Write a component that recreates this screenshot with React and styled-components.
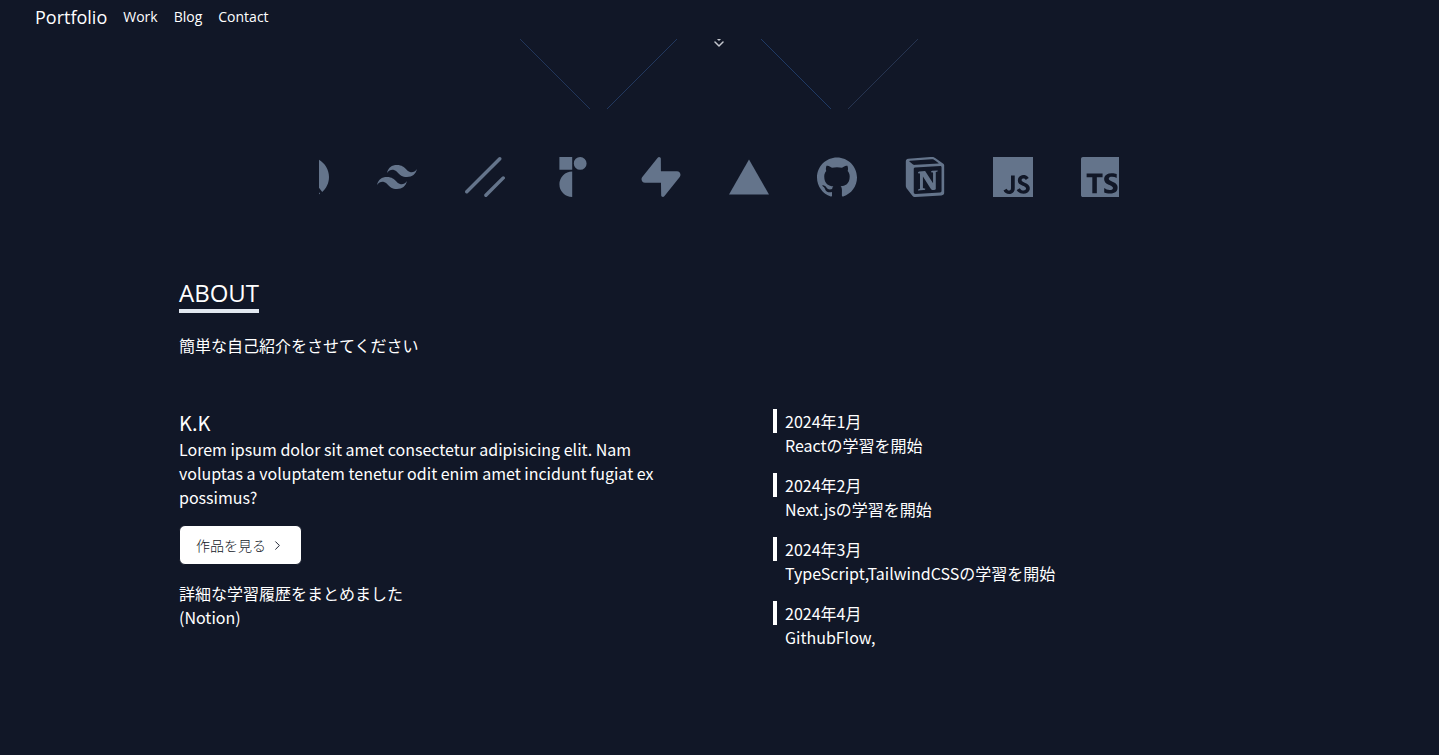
import React from "react";
import styled, { createGlobalStyle } from "styled-components";
import {
  SiNextdotjs,
  SiTailwindcss,
  SiShadcnui,
  SiRadixui,
  SiSupabase,
  SiVercel,
  SiGithub,
  SiNotion,
  SiJavascript,
  SiTypescript,
} from "react-icons/si";
import { ChevronRight } from "lucide-react";

const GlobalStyle = createGlobalStyle`
  *, *::before, *::after { box-sizing: border-box; }
  body {
    margin: 0;
    background: #111727;
    color: #ffffff;
    font-family: "Noto Sans CJK JP", "Noto Sans", sans-serif;
    font-size: 16px;
    font-weight: 400;
    line-height: 24px;
  }
  h1, h2, h3, p, ul, ol { margin: 0; padding: 0; }
  ul, ol { list-style: none; }
`;

const Header = styled.header`
  position: sticky;
  top: 0;
  z-index: 1;
  display: flex;
  align-items: center;
  gap: 16px;
  height: 39px;
  padding: 0 35px 6px;
  background: #111727;
  font-family: "Open Sans", sans-serif;
`;

const Brand = styled.a`
  color: inherit;
  font-size: 18px;
  font-weight: 400;
  text-decoration: none;
`;

const NavList = styled.ul`
  display: flex;
  gap: 16px;
`;

const NavLink = styled.a`
  color: inherit;
  font-size: 14px;
  text-decoration: none;
`;

const Main = styled.main`
  padding-right: 1px;
`;

const HeroEnd = styled.div`
  display: flex;
  justify-content: center;
`;

const Marquee = styled.div`
  max-width: 800px;
  margin: 48px auto 0;
  overflow: hidden;
`;

const Track = styled.ul`
  display: flex;
  gap: 48px;
  width: max-content;
  color: #64748b;
  transform: translateX(-30px);

  svg {
    display: block;
    width: 40px;
    height: 40px;
  }
`;

const About = styled.section`
  width: 100%;
  max-width: 1080px;
  margin: 0 auto;
  padding: 80px 0;
`;

const Title = styled.h2`
  width: max-content;
  border-bottom: 4px solid #e2e8f0;
  font-family: "Open Sans", sans-serif;
  font-size: 24px;
  font-weight: 400;
  line-height: 32px;
`;

const Lead = styled.p`
  margin-top: 20px;
`;

const Columns = styled.div`
  display: grid;
  grid-template-columns: 45% 45%;
  justify-content: space-between;
  margin-top: 52px;
`;

const Profile = styled.div`
  display: flex;
  flex-direction: column;
  align-items: flex-start;
`;

const Name = styled.h3`
  font-size: 20px;
  font-weight: 400;
  line-height: 28px;
`;

const WorksButton = styled.button`
  display: flex;
  align-items: center;
  gap: 4px;
  height: 40px;
  margin: 16px 0;
  padding: 0 16px;
  border: 1px solid #111727;
  border-radius: 6px;
  background: #ffffff;
  color: #111727;
  font-family: inherit;
  font-size: 14px;
  font-weight: 300;
  cursor: pointer;
`;

const Timeline = styled.ol`
  display: grid;
  gap: 16px;
  align-content: start;
`;

const Entry = styled.li`
  padding-left: 12px;
`;

const EntryDate = styled.p`
  margin-left: -12px;
  padding-left: 8px;
  border-left: 4px solid #ffffff;
`;

const navItems = ["Work", "Blog", "Contact"];

const tools = [
  ["Next.js", SiNextdotjs],
  ["Tailwind CSS", SiTailwindcss],
  ["shadcn/ui", SiShadcnui],
  ["Radix UI", SiRadixui],
  ["Supabase", SiSupabase],
  ["Vercel", SiVercel],
  ["GitHub", SiGithub],
  ["Notion", SiNotion],
  ["JavaScript", SiJavascript],
  ["TypeScript", SiTypescript],
];

const history = [
  ["2024年1月", "Reactの学習を開始"],
  ["2024年2月", "Next.jsの学習を開始"],
  ["2024年3月", "TypeScript,TailwindCSSの学習を開始"],
  ["2024年4月", "GithubFlow,"],
];

const HeroLines = () => (
  <svg width="400" height="70" viewBox="0 0 400 70" fill="none" aria-hidden="true">
    <path d="M1 0l70 70" stroke="#22365a" />
    <path d="M158 0l-70 70" stroke="#22385e" />
    <path d="M242 0l70 70" stroke="#203a64" />
    <path d="M399 0l-70 70" stroke="#263450" />
    <path
      d="M196 -3l4 4 4-4M196 3l4 4 4-4"
      stroke="#c4c7ce"
      strokeWidth="1.5"
      strokeLinecap="round"
      strokeLinejoin="round"
    />
  </svg>
);

export default function App() {
  return (
    <>
      <GlobalStyle />
      <Header>
        <Brand href="#top">Portfolio</Brand>
        <nav>
          <NavList>
            {navItems.map((item) => (
              <li key={item}>
                <NavLink href={`#${item.toLowerCase()}`}>{item}</NavLink>
              </li>
            ))}
          </NavList>
        </nav>
      </Header>
      <Main>
        <HeroEnd>
          <HeroLines />
        </HeroEnd>
        <Marquee>
          <Track>
            {tools.map(([name, Icon]) => (
              <li key={name}>
                <Icon aria-label={name} />
              </li>
            ))}
          </Track>
        </Marquee>
        <About>
          <Title>ABOUT</Title>
          <Lead>簡単な自己紹介をさせてください</Lead>
          <Columns>
            <Profile>
              <Name>K.K</Name>
              <p>
                Lorem ipsum dolor sit amet consectetur adipisicing elit. Nam voluptas a
                voluptatem tenetur odit enim amet incidunt fugiat ex possimus?
              </p>
              <WorksButton type="button">
                作品を見る
                <ChevronRight size={15} strokeWidth={1.5} aria-hidden="true" />
              </WorksButton>
              <p>詳細な学習履歴をまとめました</p>
              <p>(Notion)</p>
            </Profile>
            <Timeline>
              {history.map(([date, text]) => (
                <Entry key={date}>
                  <EntryDate>{date}</EntryDate>
                  <p>{text}</p>
                </Entry>
              ))}
            </Timeline>
          </Columns>
        </About>
      </Main>
    </>
  );
}
